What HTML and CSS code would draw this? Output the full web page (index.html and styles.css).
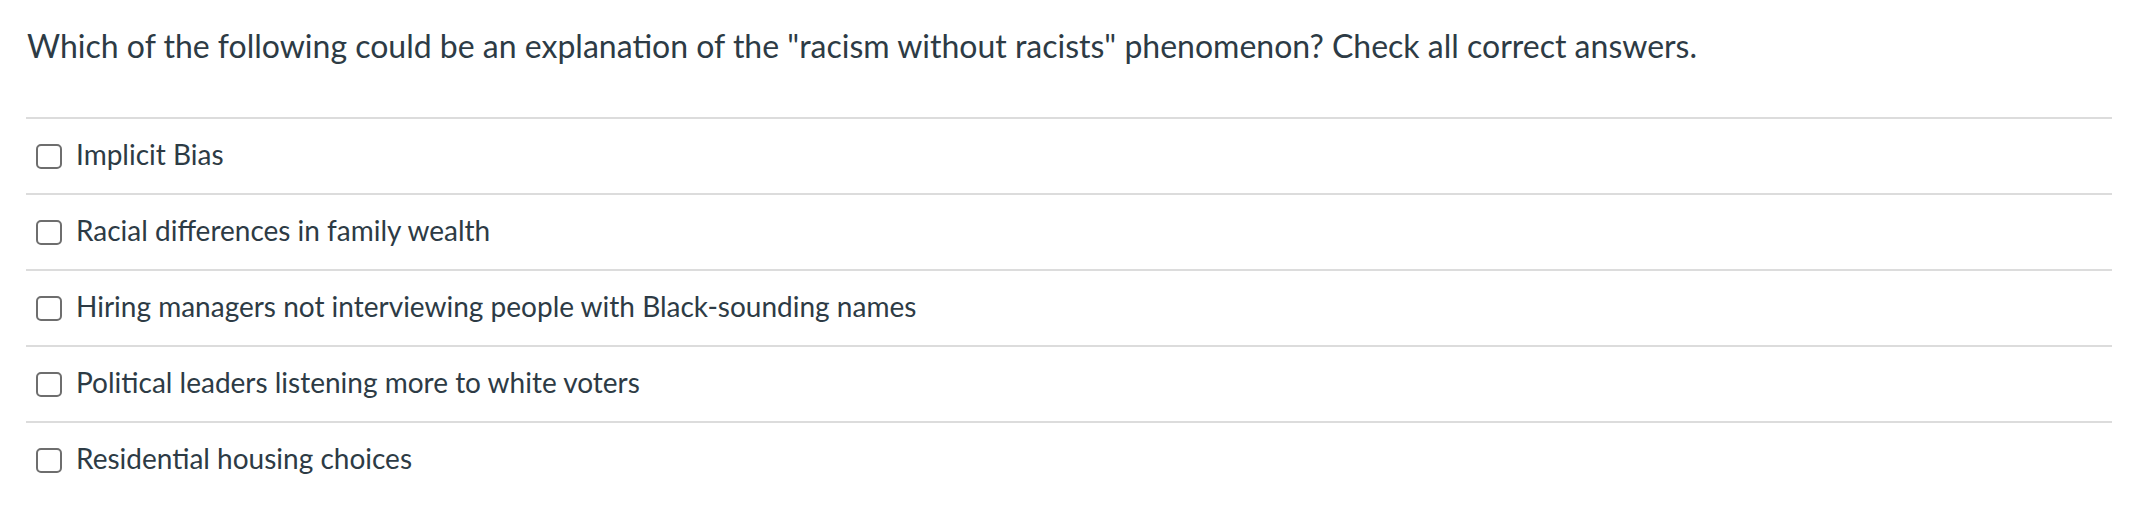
FILE: index.html
```html
<!DOCTYPE html>
<html lang="en">
<head>
<meta charset="utf-8">
<title>Quiz question</title>
<link rel="stylesheet" href="styles.css">
</head>
<body>
<div class="question">
  <div class="question-text">Which of the following could be an explanation of the "racism without racists" phenomenon? Check all correct answers.</div>
  <div class="answers">
    <label class="answer"><span class="box"></span><span class="answer-text">Implicit Bias</span></label>
    <label class="answer"><span class="box"></span><span class="answer-text">Racial differences in family wealth</span></label>
    <label class="answer"><span class="box"></span><span class="answer-text">Hiring managers not interviewing people with Black-sounding names</span></label>
    <label class="answer"><span class="box"></span><span class="answer-text">Political leaders listening more to white voters</span></label>
    <label class="answer"><span class="box"></span><span class="answer-text">Residential housing choices</span></label>
  </div>
</div>
</body>
</html>
```

FILE: styles.css
```css
html, body {
  margin: 0;
  padding: 0;
  background: #ffffff;
}
body {
  font-family: Lato, "Open Sans", sans-serif;
  color: #2d3b45;
}
.question {
  padding: 0 20px 0 26px;
}
.question-text {
  font-size: 32px;
  line-height: 40px;
  padding-top: 26px;
  padding-bottom: 51px;
  padding-left: 1px;
}
.answers {
  border-top: 2px solid #dcdcdc;
}
.answer {
  display: flex;
  align-items: center;
  height: 74px;
  padding-left: 10px;
  border-bottom: 2px solid #dcdcdc;
  font-size: 28px;
}
.answer:last-child {
  border-bottom: none;
}
.answer-text {
  line-height: 34px;
  margin-bottom: 5px;
}
.box {
  width: 22px;
  height: 21px;
  border: 2px solid #6e6e6e;
  border-radius: 5px;
  margin-right: 14px;
  flex: none;
}
```
